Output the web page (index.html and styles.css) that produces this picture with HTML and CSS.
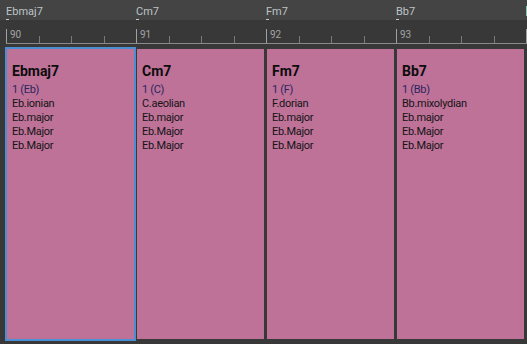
FILE: index.html
```html
<!DOCTYPE html>
<html>
  <head>
    <title>Chord Track</title>
    <link rel="stylesheet" href="styles.css">
  </head>
  <body>
    <div class="chord-lane">
      <div class="chord-label"><span>Ebmaj7</span><i class="marker"></i></div>
      <div class="chord-label"><span>Cm7</span><i class="marker"></i></div>
      <div class="chord-label"><span>Fm7</span><i class="marker"></i></div>
      <div class="chord-label"><span>Bb7</span><i class="marker"></i></div>
      <div class="chord-label next"><i class="next-edge"></i></div>
    </div>

    <div class="ruler">
      <div class="measure">
        <div class="beat first"><span class="bar-num">90</span></div>
        <div class="beat"></div><div class="beat"></div><div class="beat"></div>
      </div>
      <div class="measure">
        <div class="beat first"><span class="bar-num">91</span></div>
        <div class="beat"></div><div class="beat"></div><div class="beat"></div>
      </div>
      <div class="measure">
        <div class="beat first"><span class="bar-num">92</span></div>
        <div class="beat"></div><div class="beat"></div><div class="beat"></div>
      </div>
      <div class="measure">
        <div class="beat first"><span class="bar-num">93</span></div>
        <div class="beat"></div><div class="beat"></div><div class="beat"></div>
      </div>
      <div class="measure">
        <div class="beat first"></div>
      </div>
    </div>

    <div class="cards">
      <div class="card selected">
        <div class="card-title">Ebmaj7</div>
        <div class="card-degree">1 (Eb)</div>
        <div class="card-line">Eb.ionian</div>
        <div class="card-line">Eb.major</div>
        <div class="card-line">Eb.Major</div>
        <div class="card-line">Eb.Major</div>
      </div>
      <div class="card">
        <div class="card-title">Cm7</div>
        <div class="card-degree">1 (C)</div>
        <div class="card-line">C.aeolian</div>
        <div class="card-line">Eb.major</div>
        <div class="card-line">Eb.Major</div>
        <div class="card-line">Eb.Major</div>
      </div>
      <div class="card">
        <div class="card-title">Fm7</div>
        <div class="card-degree">1 (F)</div>
        <div class="card-line">F.dorian</div>
        <div class="card-line">Eb.major</div>
        <div class="card-line">Eb.Major</div>
        <div class="card-line">Eb.Major</div>
      </div>
      <div class="card">
        <div class="card-title">Bb7</div>
        <div class="card-degree">1 (Bb)</div>
        <div class="card-line">Bb.mixolydian</div>
        <div class="card-line">Eb.major</div>
        <div class="card-line">Eb.Major</div>
        <div class="card-line">Eb.Major</div>
      </div>
    </div>
  </body>
</html>
```

FILE: styles.css
```css
body {
  margin: 0;
  width: 527px;
  height: 344px;
  overflow: hidden;
  background-color: #383838;
  font-family: Roboto, "Liberation Sans", sans-serif;
}

.chord-lane {
  display: flex;
  height: 20px;
  padding-left: 6px;
  background-color: #444444;
  overflow: hidden;
}

.chord-label {
  flex: 0 0 130px;
  display: flex;
  flex-direction: column;
  align-items: flex-start;
  padding-top: 5px;
  font-size: 11px;
  line-height: 13px;
  color: #bcc5c8;
}

.next-edge {
  display: block;
  width: 2px;
  height: 10px;
  margin-top: 1px;
  background-color: #8fc7b4;
}

.marker {
  display: block;
  width: 3px;
  height: 1px;
  margin-top: 1px;
  background-color: #c8c8c8;
}

.ruler {
  display: flex;
  align-items: flex-end;
  height: 23px;
  margin-left: 6px;
  border-bottom: 1px solid #8a8a8a;
  overflow: hidden;
}

.measure {
  flex: 0 0 130px;
  display: flex;
  align-items: flex-end;
  height: 14px;
}

.beat {
  flex: 0 0 32.5px;
  box-sizing: border-box;
  height: 7px;
  border-left: 1px solid #7a7a7a;
}

.beat.first {
  height: 14px;
  border-left-color: #a0a0a0;
}

.bar-num {
  display: block;
  padding: 1px 0 0 3px;
  font-size: 10px;
  line-height: 9px;
  color: #a4a4a4;
}

.cards {
  display: flex;
  gap: 3px;
  margin-top: 5px;
  padding-left: 7px;
}

.card {
  flex: 0 0 127px;
  box-sizing: border-box;
  height: 290px;
  padding: 13px 5px 0;
  background-color: #be7298;
  color: #141414;
  font-size: 11px;
  line-height: 14px;
  letter-spacing: -0.3px;
}

.card.selected {
  outline: 2px solid #4a8fd2;
}

.card-title {
  margin-bottom: 3px;
  font-size: 14px;
  line-height: 18px;
  font-weight: bold;
  letter-spacing: 0;
  color: #0c0c0c;
}

.card-degree {
  color: #2a2460;
}
```
